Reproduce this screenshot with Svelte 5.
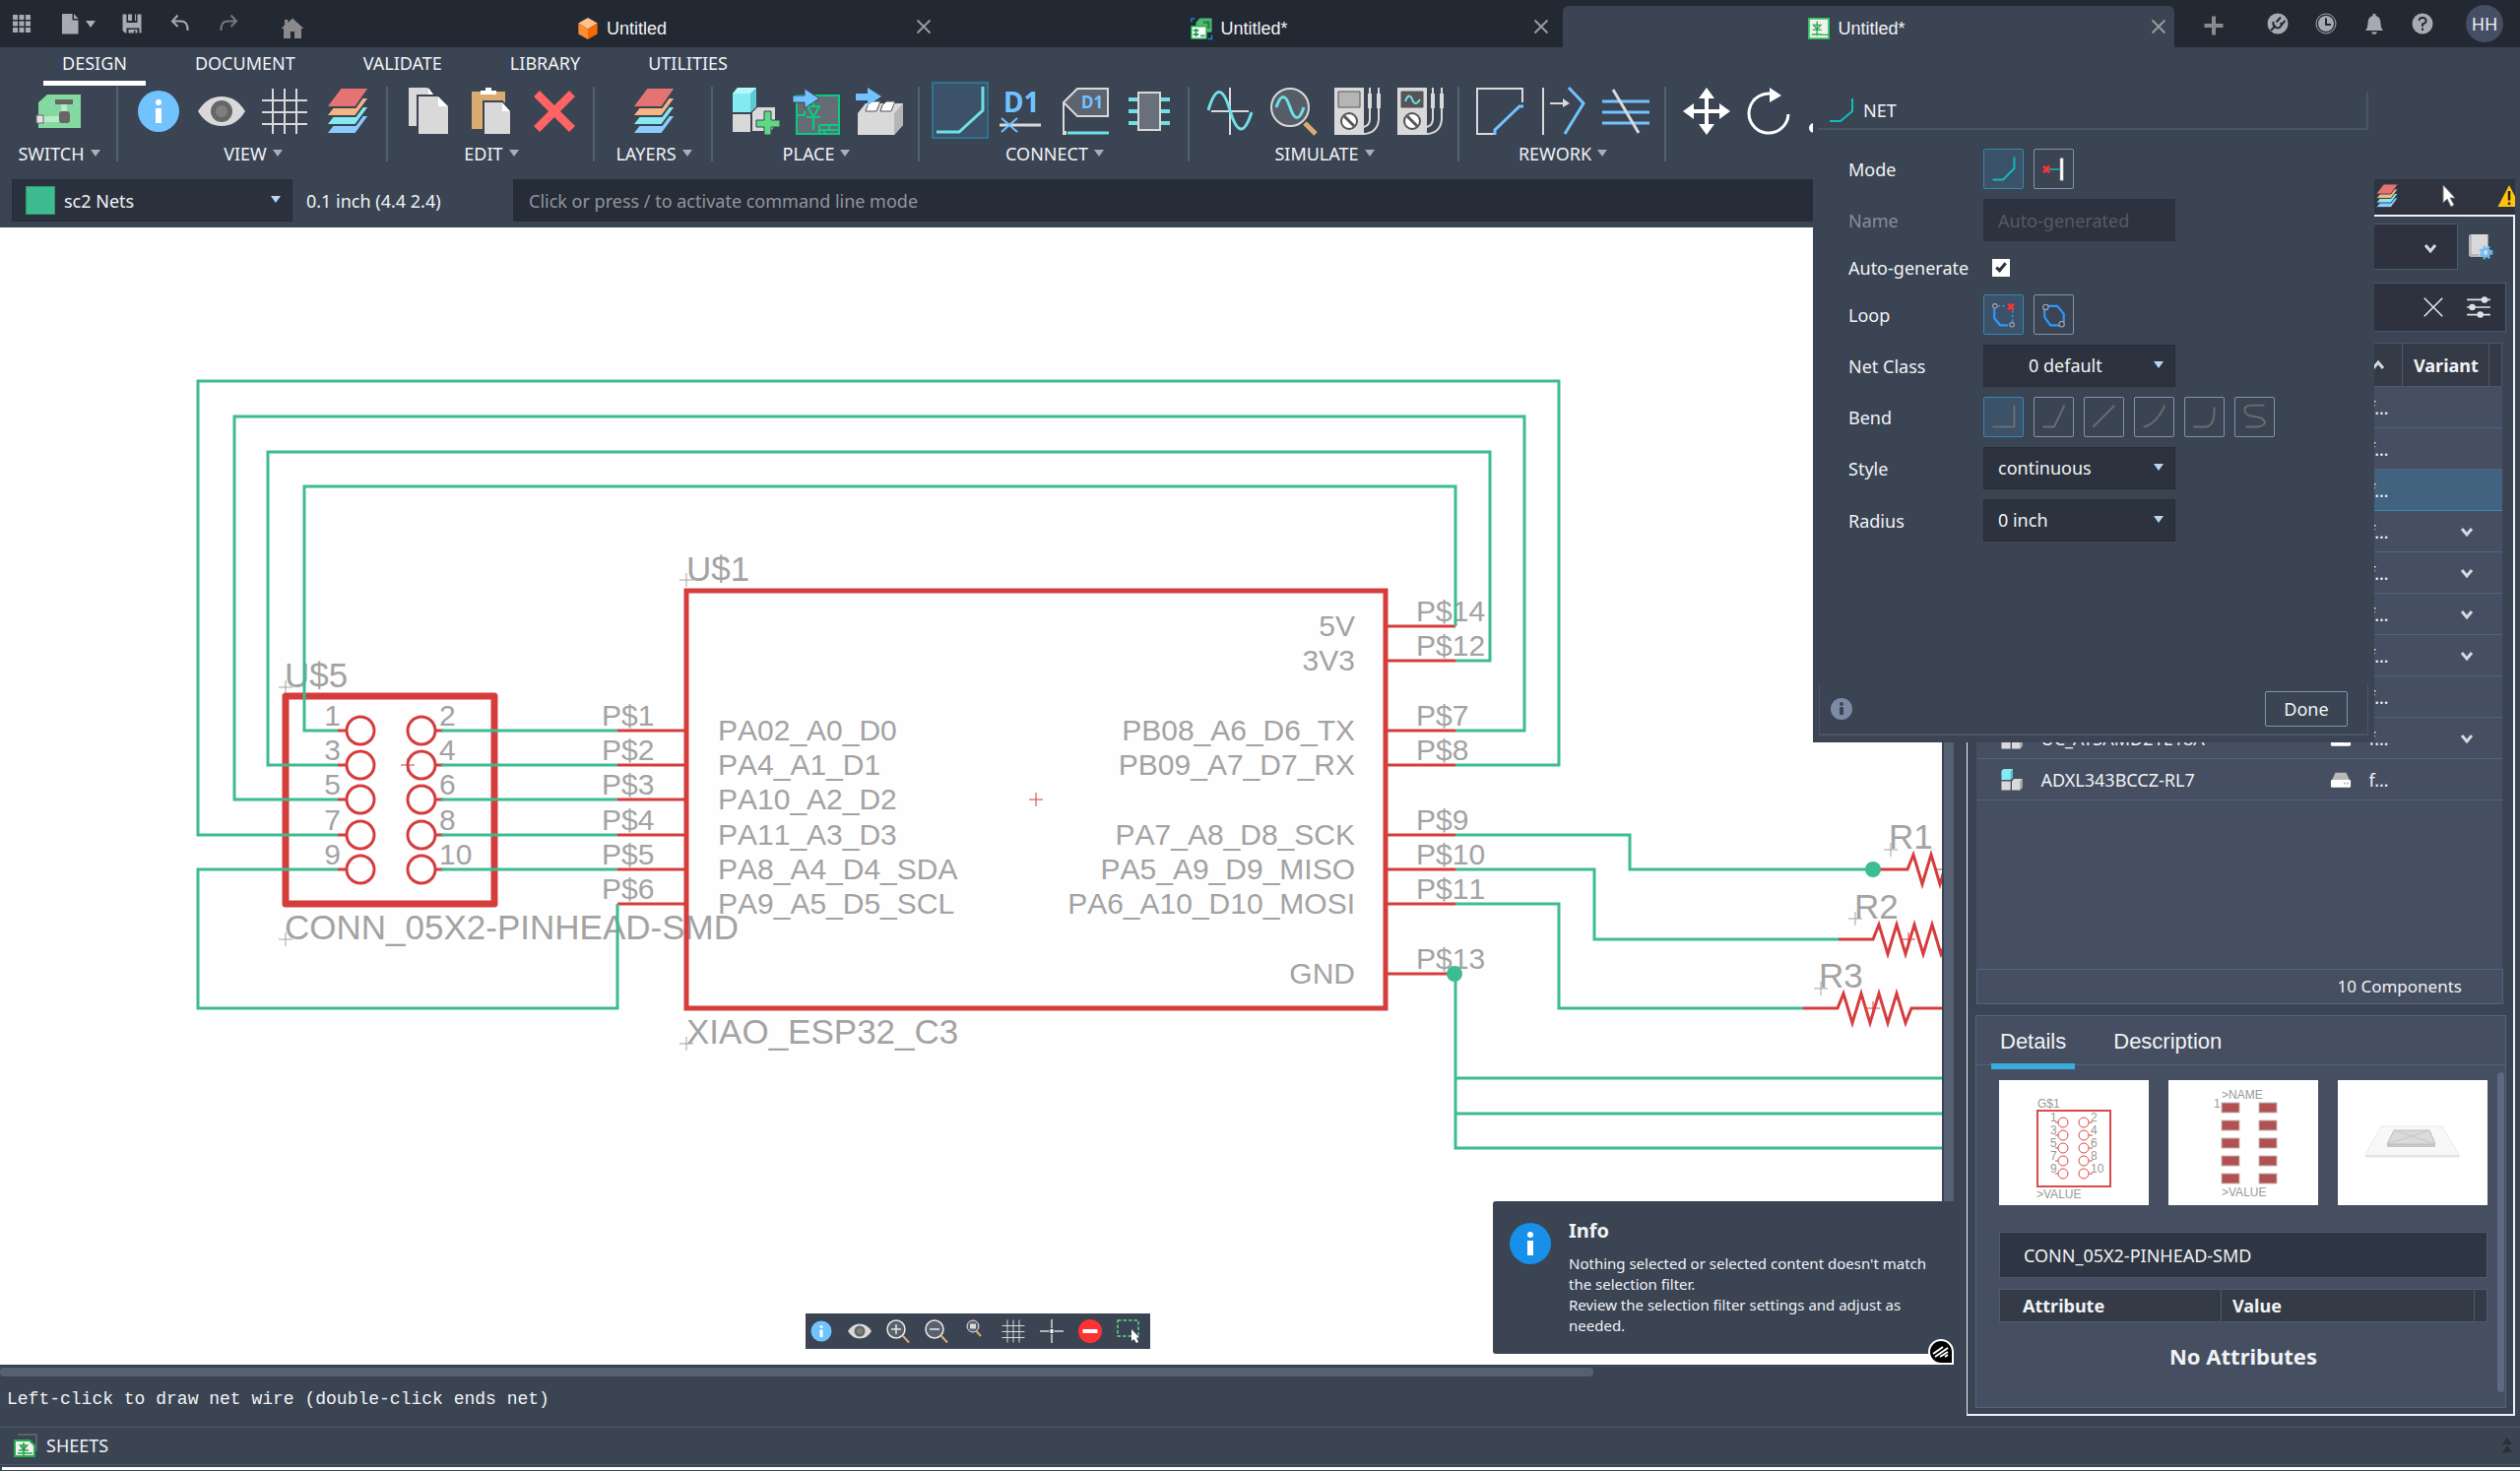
<script>
    let activeMenu = $state('DESIGN');
    let autoGenerate = $state(true);
    let detailTab = $state('Details');

    const menus = ['DESIGN', 'DOCUMENT', 'VALIDATE', 'LIBRARY', 'UTILITIES'];

    const tabs = [
        { title: 'Untitled', icon: 'cube' },
        { title: 'Untitled*', icon: 'project' },
        { title: 'Untitled*', icon: 'sheet', active: true }
    ];

    const groups = [
        { label: 'SWITCH', icons: ['switch'], wide: true },
        { label: 'VIEW', icons: ['info', 'eye', 'grid', 'layers'] },
        { label: 'EDIT', icons: ['copy', 'paste', 'delete'] },
        { label: 'LAYERS', icons: ['layers'], wide: true },
        { label: 'PLACE', icons: ['part', 'module', 'package'] },
        { label: 'CONNECT', icons: ['net', 'name', 'label', 'chip'] },
        { label: 'SIMULATE', icons: ['wave', 'probe', 'meter', 'scope'] },
        { label: 'REWORK', icons: ['miter', 'split', 'slice'] }
    ];

    const viewTools = ['info', 'eye', 'zoomin', 'zoomout', 'zoomfit', 'grid', 'origin', 'stop', 'select'];
    const bends = ['M9 31H32V8', 'M9 31H21L32 8', 'M9 31L32 8', 'M9 31Q22 29 32 8', 'M9 31H21Q32 31 31 10', 'M31 8H16Q9 9 10 14T20 20T31 25T24 31H11'];

    const components = [
        {}, {}, { selected: true },
        { expand: true }, { expand: true }, { expand: true }, { expand: true }, {},
        { name: 'UC_ATSAMD21E18A', expand: true },
        { name: 'ADXL343BCCZ-RL7' }
    ];

    // schematic, in sheet units
    const rowY = [742, 777, 812, 848, 883, 918];
    const leftNames = ['PA02_A0_D0', 'PA4_A1_D1', 'PA10_A2_D2', 'PA11_A3_D3', 'PA8_A4_D4_SDA', 'PA9_A5_D5_SCL'];
    const rightPins = [
        { y: 636, pin: 'P$14', name: '5V' },
        { y: 671, pin: 'P$12', name: '3V3' },
        { y: 742, pin: 'P$7', name: 'PB08_A6_D6_TX' },
        { y: 777, pin: 'P$8', name: 'PB09_A7_D7_RX' },
        { y: 848, pin: 'P$9', name: 'PA7_A8_D8_SCK' },
        { y: 883, pin: 'P$10', name: 'PA5_A9_D9_MISO' },
        { y: 918, pin: 'P$11', name: 'PA6_A10_D10_MOSI' },
        { y: 989, pin: 'P$13', name: 'GND' }
    ];
    const resistors = [
        { name: 'R1', x: 1902, y: 883 },
        { name: 'R2', x: 1867, y: 954 },
        { name: 'R3', x: 1831, y: 1024 }
    ];
    const wires = [
        'M343 742H309V494H1478V636',
        'M343 777H272V459H1513V671H1478',
        'M343 812H238V423H1548V742H1478',
        'M343 848H201V387H1583V777H1478',
        'M343 883H201V1024H627V918',
        'M1478 848H1655V883H1902',
        'M1478 883H1619V954H1867',
        'M1478 918H1583V1024H1831',
        'M1478 989V1166H1990',
        'M1478 1095H1990',
        'M1478 1131H1990'
    ];
    const crosses = [[697, 589], [290, 698], [290, 954], [697, 1060], [1920, 863], [1884, 933], [1849, 1004]];
</script>

{#snippet icon(name)}
    <svg viewBox="0 0 48 48" aria-hidden="true">
        {#if name === 'switch'}
            <path d="M3 15L12 7H46V41H3z" fill="#83d99f" />
            <path d="M8 32H24M29 17V25" stroke="#b5ebc5" stroke-width="6" />
            <path d="M20 12H38V17H20z" fill="#666" />
            <rect x="24" y="24" width="11" height="12" rx="3" fill="#666" />
            <path d="M1 28H8V36H1z" fill="#e3e3e3" stroke="#666" />
        {:else if name === 'info'}
            <circle cx="24" cy="24" r="21" fill="#70c3ff" />
            <circle cx="24" cy="15" r="3" fill="#fff" />
            <path d="M21 21H27V36H21z" fill="#fff" />
        {:else if name === 'eye'}
            <path d="M0 24Q9 9 24 9T48 24Q39 39 24 39T0 24z" fill="#d9d9d9" />
            <circle cx="24" cy="24" r="11" fill="#666" />
            <circle cx="24" cy="24" r="6" fill="#808080" />
        {:else if name === 'grid'}
            <path d="M12 1V47M24 1V47M36 1V47M1 13H47M1 25H47M1 37H47" stroke="#d9d9d9" stroke-width="2" />
        {:else if name === 'layers'}
            <g stroke="#3b4453" stroke-width="2">
                <path d="M17 28H46L32 47H2z" fill="#8ccbff" />
                <path d="M17 19H46L32 38H2z" fill="#85e9f0" />
                <path d="M17 10H46L32 29H2z" fill="#f5b583" />
                <path d="M17 0H46L32 20H2z" fill="#e67373" />
            </g>
        {:else if name === 'copy'}
            <path d="M4 0H23L29 7V39H4z" fill="#d9d9d9" />
            <path d="M13 8H34L45 19V48H13z" fill="#d9d9d9" stroke="#3b4453" stroke-width="2" />
            <path d="M24 0V7H29zM34 9V19H44z" fill="#fff" />
        {:else if name === 'paste'}
            <path d="M4 4H38V42H4z" fill="#dbac71" />
            <path d="M13 3H18V0H24V3H29V7H13z" fill="#fff" />
            <path d="M16 14H35L44 24V48H16z" fill="#d9d9d9" stroke="#3b4453" stroke-width="2" />
            <path d="M35 15V24H43z" fill="#fff" />
        {:else if name === 'delete'}
            <path d="M3 9L9 3L24 18L39 3L45 9L30 24L45 39L39 45L24 30L9 45L3 39L18 24z" fill="#ff6363" />
        {:else if name === 'part'}
            <path d="M3 6L8 0H27V19L21 25H3z" fill="#85ebf2" />
            <path d="M3 6L8 0H27L21 6z" fill="#b5f7fb" />
            <path d="M21 6L27 0V19L21 25z" fill="#5ccbd6" />
            <path d="M3 27H21V45H3zM23 25L28 20H46V38L42 44H23z" fill="#d9d9d9" />
            <path d="M35 24H42V33H51V40H42V48H35V40H27V33H35z" fill="#5fd884" stroke="#3b4453" />
        {:else if name === 'module'}
            <path d="M4 8H47V47H4z" fill="#666c76" stroke="#08cc7f" stroke-width="2" />
            <path d="M15 19H27L21 30zM14 30H28M21 30V43M21 12V19M5 28H12V24M27 38H47M27 43H47M27 38V47M37 38V43M32 43V47" fill="none" stroke="#08cc7f" stroke-width="2" />
            <path d="M0 8H12V1L27 11L12 21V15H0z" fill="#70c3ff" stroke="#3b4453" />
        {:else if name === 'package'}
            <path d="M2 26L10 16H48V38L39 48H2z" fill="#d9d9d9" />
            <path d="M39 26L48 16V38L39 48z" fill="#b5b5b5" />
            <path d="M12 18L16 14H25L21 24H10zM27 18L31 14H40L36 24H25z" fill="#fff" stroke="#555" />
            <path d="M0 6H12V0L26 9L12 18V13H0z" fill="#70c3ff" />
        {:else if name === 'net'}
            <path d="M0 46H23L47 24V0" fill="none" stroke="#6fe0e6" stroke-width="3" />
        {:else if name === 'name'}
            <text x="4" y="25" class="d1 big">D1</text>
            <path d="M0 38H42" stroke="#d9d9d9" stroke-width="3" />
            <path d="M2 31L18 45M18 31L2 45" stroke="#70c3ff" stroke-width="2" />
        {:else if name === 'label'}
            <path d="M1 15L15 1H46V29H15z" fill="#5d6470" stroke="#d9d9d9" stroke-width="2" />
            <path d="M1 15V44" stroke="#d9d9d9" stroke-width="2" />
            <path d="M0 44H4V48H0z" fill="#d9d9d9" />
            <path d="M5 46H47" stroke="#6fe0e6" stroke-width="3" />
            <text x="19" y="21" class="d1">D1</text>
        {:else if name === 'chip'}
            <path d="M3 12H45M3 24H45M3 36H45" stroke="#6fe0e6" stroke-width="4" />
            <path d="M13 5H35V43H13z" fill="#69707c" stroke="#d9d9d9" stroke-width="2" />
        {:else if name === 'wave'}
            <path d="M24 0V48M5 24H43" stroke="#d9d9d9" stroke-width="2" />
            <path d="M2 23Q13 -14 24 23T46 25" fill="none" stroke="#6fe0e6" stroke-width="3" />
        {:else if name === 'probe'}
            <path d="M36 36L47 47" stroke="#dbac71" stroke-width="5" />
            <circle cx="21" cy="20" r="19" fill="#565d69" stroke="#d9d9d9" stroke-width="2" />
            <path d="M7 20Q14 -1 21 20T35 20" fill="none" stroke="#6fe0e6" stroke-width="3" />
        {:else if name === 'meter' || name === 'scope'}
            <path d="M2 0H32V48H2z" fill="#d9d9d9" />
            <path d="M6 4H28V20H6z" fill={name === 'scope' ? '#555' : '#b5b5b5'} stroke="#555" />
            {#if name === 'scope'}
                <path d="M10 14Q14 4 17 12T25 12" fill="none" stroke="#6fe0e6" stroke-width="2" />
            {/if}
            <circle cx="17" cy="34" r="8" fill="#fff" stroke="#555" stroke-width="2" />
            <path d="M12 29L22 39" stroke="#555" stroke-width="3" />
            <path d="M38 0V32Q38 38 32 40M47 0V32Q46 46 32 47" fill="none" stroke="#d9d9d9" stroke-width="2" />
            <path d="M36 6H40V21H36zM45 6H49V21H45z" fill="#d9d9d9" />
        {:else if name === 'miter'}
            <path d="M20 47H1V1H47V15" fill="none" stroke="#d9d9d9" stroke-width="2" />
            <path d="M19 48V43L44 19H48" fill="none" stroke="#70c3ff" stroke-width="3" />
        {:else if name === 'split'}
            <path d="M4 0V48M11 16H26" stroke="#d9d9d9" stroke-width="2" />
            <path d="M24 11L31 16L24 20z" fill="#d9d9d9" />
            <path d="M30 0L45 16L26 47" fill="none" stroke="#70c3ff" stroke-width="3" />
        {:else if name === 'slice'}
            <path d="M0 14H48M0 25H48M0 36H48" stroke="#70c3ff" stroke-width="3" />
            <path d="M11 2L37 46" stroke="#d9d9d9" stroke-width="3" />
        {:else if name === 'move'}
            <path d="M24 0L32 11H26V22H37V16L48 24L37 32V26H26V37H32L24 48L16 37H22V26H11V32L0 24L11 16V22H22V11H16z" fill="#fff" />
        {:else if name === 'rotate'}
            <path d="M29 7A20 20 0 1 0 43 27" fill="none" stroke="#fff" stroke-width="3" />
            <path d="M24 0L36 8L24 15z" fill="#fff" />
        {:else if name === 'mirror'}
            <circle cx="5" cy="41" r="5" fill="#fff" />
        {:else if name === 'zoomin' || name === 'zoomout'}
            <path d="M34 34L46 47" stroke="#dbac71" stroke-width="4" />
            <circle cx="20" cy="20" r="18" fill="#5a616d" stroke="#e8e8e8" stroke-width="3" />
            <path d={name === 'zoomin' ? 'M10 20H30M20 10V30' : 'M10 20H30'} stroke="#e8e8e8" stroke-width="3" />
        {:else if name === 'zoomfit'}
            <path d="M27 24L36 34" stroke="#dbac71" stroke-width="4" />
            <circle cx="20" cy="14" r="12" fill="#5a616d" stroke="#e8e8e8" stroke-width="2" />
            <path d="M14 9H26V19H14z" fill="#d9d9d9" />
        {:else if name === 'origin'}
            <path d="M24 0V48M0 24H48" stroke="#d9d9d9" stroke-width="3" />
            <path d="M20 19H28V29H20z" fill="#fff" stroke="#3b4453" stroke-width="2" />
        {:else if name === 'stop'}
            <circle cx="24" cy="24" r="24" fill="#ff3232" />
            <path d="M9 20H39V28H9z" fill="#fff" />
        {:else if name === 'select'}
            <path d="M2 2H44V34H2z" fill="none" stroke="#5fd884" stroke-width="3" stroke-dasharray="7 4" />
            <path d="M30 20V44L35 40L40 48L44 46L40 37H46z" fill="#fff" />
        {:else if name === 'cube'}
            <path d="M24 0L45 12L24 25L3 12z" fill="#ffc08f" />
            <path d="M3 12L24 25V48L3 36z" fill="#ff8d33" />
            <path d="M45 12L24 25V48L45 36z" fill="#f56a00" />
        {:else if name === 'project'}
            <path d="M2 9V2H10M39 47H47V38" fill="none" stroke="#1a8be0" stroke-width="3" />
            <path d="M12 11L20 1H47V32H12z" fill="#4cbb70" />
            <path d="M28 10H40V24" fill="none" stroke="#2b7a45" stroke-width="5" />
            <path d="M2 19H35V46H2z" fill="#fff" stroke="#1fb455" stroke-width="3" />
            <path d="M12 24V42M6 28H18M6 37H18M22 40H32" stroke="#22a04a" stroke-width="4" />
        {:else if name === 'sheet'}
            <path d="M2 2H46V46H2z" fill="#f1f1f1" stroke="#30c25c" stroke-width="4" />
            <path d="M12 16H28L20 26zM10 27H30M20 8V40M8 37H30M28 38H46" fill="none" stroke="#30a852" stroke-width="3" />
        {:else if name === 'apps'}
            <path d="M6 6H16V16H6zM19 6H29V16H19zM32 6H42V16H32zM6 19H16V29H6zM19 19H29V29H19zM32 19H42V29H32zM6 32H16V42H6zM19 32H29V42H19zM32 32H42V42H32z" fill="#a7aab3" />
        {:else if name === 'file'}
            <path d="M8 4H29V17H41V45H8zM32 4L41 14H32z" fill="#a7aab3" />
        {:else if name === 'save'}
            <path d="M5 5H13V22H35V5H43V43H39V33H13V43H10L5 38zM16 5H24V18H16zM30 5H32V18H30zM17 36H35V43H31V38H28V43H17z" fill="#a7aab3" />
        {:else if name === 'undo'}
            <path d="M19 7L8 19L19 30M8 19H25Q40 19 39 38" fill="none" stroke="#a7aab3" stroke-width="4" />
        {:else if name === 'redo'}
            <path d="M29 7L40 19L29 30M40 19H23Q8 19 9 38" fill="none" stroke="#727780" stroke-width="4" />
        {:else if name === 'home'}
            <path d="M24 5L47 26H42V46H28V32H20V46H6V26H1L8 19V8H15V14z" fill="#8a8a8a" />
        {:else if name === 'plus'}
            <path d="M20 5H28V20H43V28H28V43H20V28H5V20H20z" fill="#8a8a8a" />
        {:else if name === 'close'}
            <path d="M11 11L37 37M37 11L11 37" stroke="#9a9a9a" stroke-width="4" />
        {:else if name === 'extensions'}
            <circle cx="24" cy="24" r="21" fill="#a7aab3" />
            <path d="M10 38L20 28M15 20Q13 31 24 33Q34 31 30 22M21 21L30 11M30 28L39 18" fill="none" stroke="#222933" stroke-width="4" />
        {:else if name === 'clock'}
            <circle cx="24" cy="24" r="20" fill="none" stroke="#a7aab3" stroke-width="2" />
            <circle cx="24" cy="24" r="16" fill="#a7aab3" />
            <path d="M24 13V26H34" fill="none" stroke="#222933" stroke-width="4" />
        {:else if name === 'bell'}
            <path d="M21 4H27V8Q37 10 37 24Q37 33 42 38H6Q11 33 11 24Q11 10 21 8zM18 41H30Q28 46 24 46T18 41z" fill="#a7aab3" />
        {:else if name === 'help'}
            <circle cx="24" cy="24" r="21" fill="#a7aab3" />
            <path d="M17 18Q18 11 25 12T31 19Q31 23 24 25V30M24 33V38" fill="none" stroke="#222933" stroke-width="4" />
        {:else if name === 'parts'}
            <path d="M1 5L5 0H26V19L21 24H1z" fill="#85ebf2" />
            <path d="M21 5L26 0V19L21 24z" fill="#4fc1d0" />
            <path d="M1 27H21V47H1zM24 27L29 22H47V41L42 47H24z" fill="#d9d9d9" />
            <path d="M42 27L47 22V41L42 47z" fill="#a5a5a5" />
        {:else if name === 'drive'}
            <path d="M12 8H36L45 28H3z" fill="#b9b9b9" />
            <path d="M2 26Q2 24 5 24H43Q46 24 46 26V38Q46 41 43 41H5Q2 41 2 38z" fill="#fff" />
            <path d="M31 32H34M38 32H41" stroke="#999" stroke-width="4" />
        {:else if name === 'library'}
            <path d="M7 0H38V42H7Q2 42 2 38V5Q2 0 7 0z" fill="#d9d9d9" />
            <path d="M7 0Q2 0 2 5V38Q2 42 7 42H20V37H7z" fill="#b5b5b5" />
            <circle cx="34" cy="34" r="7" fill="none" stroke="#6cbcf5" stroke-width="5" />
            <circle cx="34" cy="34" r="11" fill="none" stroke="#6cbcf5" stroke-width="4" stroke-dasharray="4 5" />
        {:else if name === 'sliders'}
            <path d="M2 10H46M2 24H46M2 38H46" stroke="#dde1e8" stroke-width="3" />
            <circle cx="35" cy="10" r="6" fill="#dde1e8" />
            <circle cx="12" cy="24" r="6" fill="#dde1e8" />
            <circle cx="27" cy="38" r="6" fill="#dde1e8" />
        {:else if name === 'clear'}
            <path d="M7 7L41 41M41 7L7 41" stroke="#dde1e8" stroke-width="3" />
        {:else if name === 'pointer'}
            <path d="M14 2V38L22 30L30 46L36 42L28 28H38z" fill="#fff" stroke="#777" stroke-width="2" />
        {:else if name === 'warning'}
            <path d="M24 2L47 46H1z" fill="#ffc20e" />
            <path d="M24 14V33M24 37V42" stroke="#222" stroke-width="5" />
        {:else if name === 'sheets'}
            <path d="M8 2H46V36" fill="none" stroke="#666b72" stroke-width="3" />
            <path d="M2 14H32L42 24V46H2z" fill="#f1f1f1" stroke="#22b14c" stroke-width="4" />
            <path d="M13 24H27L20 33zM10 34H30M20 18V44M8 40H38" fill="none" stroke="#22a047" stroke-width="3" />
        {:else if name === 'dismiss'}
            <path d="M4 18L15 30M15 18L4 30" stroke="#ff3232" stroke-width="5" />
            <path d="M15 24H34" stroke="#1eb3b3" stroke-width="3" />
            <path d="M35 3H41V45H35z" fill="#fff" stroke="#888" />
        {:else if name === 'loopoff'}
            <path d="M6 11V30L17 43H32" fill="none" stroke="#2e97ff" stroke-width="4" />
            <path d="M13 7H26M40 16V38" stroke="#2e97ff" stroke-width="3" stroke-dasharray="4 4" />
            <path d="M32 3L42 14M42 3L32 14" stroke="#ff3232" stroke-width="5" />
            <circle cx="7" cy="7" r="4" fill="#3b4453" stroke="#aaa" stroke-width="2" />
            <circle cx="39" cy="42" r="4" fill="#3b4453" stroke="#aaa" stroke-width="2" />
        {:else if name === 'loopon'}
            <path d="M6 9V28L17 43H35L42 36V22L30 7H14z" fill="none" stroke="#2e97ff" stroke-width="4" />
            <circle cx="8" cy="9" r="5" fill="#3b4453" stroke="#aaa" stroke-width="2" />
            <circle cx="38" cy="41" r="5" fill="#3b4453" stroke="#aaa" stroke-width="2" />
        {/if}
    </svg>
{/snippet}

{#snippet chevron(up)}
    <svg class="chevron" viewBox="0 0 14 14" aria-hidden="true">
        <path d={up ? 'M2 10L7 4L12 10' : 'M2 4L7 10L12 4'} fill="none" stroke="#d5d9e0" stroke-width="3" />
    </svg>
{/snippet}

<div class="app">
    <header class="titlebar">
        <div class="quick">
            <button aria-label="Data panel">{@render icon('apps')}</button>
            <button class="file" aria-label="File">{@render icon('file')}<i class="caret"></i></button>
            <button aria-label="Save">{@render icon('save')}</button>
            <button aria-label="Undo">{@render icon('undo')}</button>
            <button aria-label="Redo">{@render icon('redo')}</button>
            <button class="home" aria-label="Home">{@render icon('home')}</button>
        </div>
        <div class="tabs">
            {#each tabs as tab}
                <div class="tab" class:active={tab.active}>
                    <button class="tab-title">{@render icon(tab.icon)}{tab.title}</button>
                    <button class="tab-close" aria-label="Close">{@render icon('close')}</button>
                </div>
            {/each}
        </div>
        <button class="new" aria-label="New">{@render icon('plus')}</button>
        <div class="account">
            {#each ['extensions', 'clock', 'bell', 'help'] as name}
                <button aria-label={name}>{@render icon(name)}</button>
            {/each}
            <button class="avatar">HH</button>
        </div>
    </header>

    <nav class="menus">
        {#each menus as menu}
            <button class:active={activeMenu === menu} onclick={() => (activeMenu = menu)}>{menu}</button>
        {/each}
    </nav>

    <div class="ribbon">
        {#each groups as group}
            <div class="group" class:wide={group.wide}>
                <div class="tools">
                    {#each group.icons as name}
                        <button class="tool" class:on={name === 'net'} aria-label={name}>{@render icon(name)}</button>
                    {/each}
                </div>
                <button class="group-label">{group.label}<i class="caret"></i></button>
            </div>
        {/each}
        <div class="group last">
            <div class="tools">
                <button class="tool" aria-label="move">{@render icon('move')}</button>
                <button class="tool" aria-label="rotate">{@render icon('rotate')}</button>
                <button class="tool" aria-label="mirror">{@render icon('mirror')}</button>
            </div>
        </div>
    </div>

    <main>
        <section class="work">
            <div class="command">
                <div class="layer">
                    <span class="swatch"></span>
                    <select aria-label="Layer"><option>sc2 Nets</option></select>
                    <i class="caret blue"></i>
                </div>
                <span class="coords">0.1 inch (4.4 2.4)</span>
                <input aria-label="Command line" placeholder="Click or press / to activate command line mode" />
            </div>

            <div class="sheet">
                <svg class="drawing" viewBox="0 231 1972 1155" preserveAspectRatio="xMinYMin slice">
                    <g class="names">
                        <text x="697" y="590">U$1</text>
                        <text x="697" y="1060">XIAO_ESP32_C3</text>
                        <text x="289" y="698">U$5</text>
                        <text x="289" y="954">CONN_05X2-PINHEAD-SMD</text>
                        {#each resistors as r}
                            <text x={r.x + 16} y={r.y - 21}>{r.name}</text>
                        {/each}
                    </g>
                    <g class="pins">
                        {#each rowY as y, i}
                            <text x="611" y={y - 5}>P${i + 1}</text>
                            <text x="729" y={y + 10}>{leftNames[i]}</text>
                        {/each}
                        {#each rowY.slice(0, 5) as y, i}
                            <text x="346" y={y - 5} text-anchor="end">{i * 2 + 1}</text>
                            <text x="446" y={y - 5}>{i * 2 + 2}</text>
                        {/each}
                        {#each rightPins as p}
                            <text x="1438" y={p.y - 5}>{p.pin}</text>
                            <text x="1376" y={p.y + 10} text-anchor="end">{p.name}</text>
                        {/each}
                    </g>
                    <path class="cross" d={crosses.map(([x, y]) => `M${x - 7} ${y}h14M${x} ${y - 7}v14`).join('')} />

                    <g class="symbol">
                        <rect x="697" y="600" width="710" height="424" stroke-width="5" />
                        <rect x="290" y="707" width="212" height="211" stroke-width="7" stroke-linejoin="round" />
                        {#each rowY as y}
                            <path d="M627 {y}H697" />
                        {/each}
                        {#each rowY.slice(0, 5) as y}
                            <circle cx="366" cy={y} r="14" />
                            <circle cx="428" cy={y} r="14" />
                            <path d="M343 {y}H352M441 {y}H450" />
                        {/each}
                        {#each rightPins as p}
                            <path d="M1407 {p.y}H1478" />
                        {/each}
                        {#each resistors as r}
                            <path d="M{r.x} {r.y}h35l6 -15l9 30l9 -30l9 30l9 -30l9 30l9 -30l9 30l6 -15h50" />
                            <path class="thin" d="M{r.x + 64} {r.y}h14m-7 -7v14" />
                        {/each}
                        <path class="thin" d="M407 777h14m-7 -7v14M1045 812h14m-7 -7v14" />
                    </g>

                    <g class="wires">
                        {#each wires as d}
                            <path {d} />
                        {/each}
                        {#each rowY.slice(0, 5) as y}
                            <path d="M448 {y}H627" />
                        {/each}
                    </g>
                    <circle class="joint" cx="1477" cy="989" r="8" />
                    <circle class="joint" cx="1902" cy="883" r="8" />
                </svg>
                <div class="vscroll"></div>

                <div class="view-tools">
                    {#each viewTools as name}
                        <button aria-label={name}>{@render icon(name)}</button>
                    {/each}
                </div>

                <div class="toast" role="status">
                    <svg viewBox="0 0 42 42" aria-hidden="true">
                        <circle cx="21" cy="21" r="21" fill="#188fe8" />
                        <circle cx="21" cy="12" r="3" fill="#fff" />
                        <path d="M18 18H24V33H18z" fill="#fff" />
                    </svg>
                    <div>
                        <h2>Info</h2>
                        <p>Nothing selected or selected content doesn't match the selection filter.<br />Review the selection filter settings and adjust as needed.</p>
                    </div>
                </div>

                <svg class="badge" viewBox="0 0 26 26" aria-hidden="true">
                    <path d="M13 1A12 12 0 1 0 13 25H25V13A12 12 0 0 0 13 1z" fill="#000" stroke="#fff" stroke-width="2" />
                    <path d="M5 15L15 8M7 18L20 9M12 18L20 13M17 18L20 16" stroke="#fff" stroke-width="2" />
                </svg>
            </div>
            <div class="hscroll"><div class="thumb"></div></div>
            <div class="status">Left-click to draw net wire (double-click ends net)</div>
        </section>

        <aside>
            <div class="side-tabs">
                <button aria-label="Layers">{@render icon('layers')}</button>
                <button aria-label="Selection filter">{@render icon('pointer')}</button>
                <button aria-label="Errors">{@render icon('warning')}</button>
            </div>
            <div class="panel">
                <div class="library">
                    <div class="pick">
                        <select aria-label="Library"><option></option></select>
                        {@render chevron(false)}
                    </div>
                    <button aria-label="Library manager">{@render icon('library')}</button>
                </div>
                <div class="search">
                    <input aria-label="Search" />
                    <button aria-label="Clear">{@render icon('clear')}</button>
                    <button class="filter" aria-label="Filter">{@render icon('sliders')}</button>
                </div>
                <div class="list">
                    <table>
                        <thead>
                            <tr><th class="c-icon"></th><th></th><th class="c-type"></th><th class="c-lib">{@render chevron(true)}</th><th class="c-variant">Variant</th><th class="c-end"></th></tr>
                        </thead>
                        <tbody>
                            {#each components as part}
                                <tr class:selected={part.selected}>
                                    <td class="c-icon">{@render icon('parts')}</td>
                                    <td>{part.name ?? ''}</td>
                                    <td class="c-type">{@render icon('drive')}</td>
                                    <td>f…</td>
                                    <td class="c-expand" colspan="2">{#if part.expand}{@render chevron(false)}{/if}</td>
                                </tr>
                            {/each}
                        </tbody>
                    </table>
                </div>
                <div class="count">10 Components</div>

                <div class="details">
                    <div class="detail-tabs">
                        {#each ['Details', 'Description'] as name}
                            <button class:active={detailTab === name} onclick={() => (detailTab = name)}>{name}</button>
                        {/each}
                    </div>
                    <div class="detail-body">
                        <div class="previews">
                            <svg viewBox="0 0 152 127">
                                <rect x="39" y="31" width="74" height="77" fill="none" stroke="#d94a4a" stroke-width="2" />
                                <text x="39" y="28">G$1</text>
                                <text x="38" y="120">&gt;VALUE</text>
                                {#each [0, 1, 2, 3, 4] as i}
                                    <circle cx="65" cy={43 + i * 13} r="5" fill="none" stroke="#d94a4a" />
                                    <circle cx="86" cy={43 + i * 13} r="5" fill="none" stroke="#d94a4a" />
                                    <path d="M57 {43 + i * 13}h3M91 {43 + i * 13}h4" stroke="#d94a4a" />
                                    <text x="52" y={42 + i * 13}>{i * 2 + 1}</text>
                                    <text x="93" y={42 + i * 13}>{i * 2 + 2}</text>
                                {/each}
                            </svg>
                            <svg viewBox="0 0 152 127">
                                <text x="54" y="19">&gt;NAME</text>
                                <text x="46" y="28">1</text>
                                <text x="54" y="118">&gt;VALUE</text>
                                {#each [0, 1, 2, 3, 4] as i}
                                    <rect x="54" y={23 + i * 18} width="18" height="10" fill="#b55052" stroke="#bbb" />
                                    <rect x="92" y={23 + i * 18} width="18" height="10" fill="#b55052" stroke="#bbb" />
                                {/each}
                            </svg>
                            <svg viewBox="0 0 152 127">
                                <path d="M44 47H106L123 76V78H28V76z" fill="#f8f8f8" stroke="#e8e8e8" />
                                <path d="M28 76H123V78H28z" fill="#e3e3e3" />
                                <path d="M57 51H93L99 65V68H50V65z" fill="#c6c6c6" />
                                <path d="M57 51H93L99 65H50z" fill="#dadada" stroke="#bcbcbc" />
                                <path d="M57 51L99 65M93 51L50 65" stroke="#c6c6c6" />
                            </svg>
                        </div>
                        <input class="part-name" aria-label="Component" value="CONN_05X2-PINHEAD-SMD" readonly />
                        <table class="attributes">
                            <thead><tr><th class="a-name">Attribute</th><th>Value</th><th class="a-end"></th></tr></thead>
                        </table>
                        <p class="none">No Attributes</p>
                    </div>
                </div>
            </div>
        </aside>
    </main>

    <footer>
        <button class="sheets">{@render icon('sheets')}SHEETS</button>
        <svg class="up" viewBox="0 0 10 16" aria-hidden="true"><path d="M5 0L10 7H0zM5 8L10 15H0z" fill="#2b2f36" /></svg>
    </footer>
    <div class="strip"></div>

    <form class="dialog" onsubmit={(e) => e.preventDefault()}>
        <div class="dialog-head">
            <svg viewBox="0 0 24 24" aria-hidden="true"><path d="M0 23H11L23 13V0" fill="none" stroke="#0fbdbd" stroke-width="2" /></svg>
            NET
        </div>
        <div class="dialog-body">
            <span>Mode</span>
            <div class="set">
                <button class="on" aria-label="Net"><svg viewBox="0 0 41 41"><path d="M9 32H20L32 20V8" fill="none" stroke="#0fbdbd" stroke-width="2" /></svg></button>
                <button aria-label="Remove">{@render icon('dismiss')}</button>
            </div>
            <label class="dim" for="net-name">Name</label>
            <input id="net-name" class="field" placeholder="Auto-generated" disabled />
            <label class="auto" for="auto">Auto-generate</label>
            <input id="auto" type="checkbox" bind:checked={autoGenerate} />
            <span>Loop</span>
            <div class="set">
                <button class="on" aria-label="Remove loops">{@render icon('loopoff')}</button>
                <button aria-label="Keep loops">{@render icon('loopon')}</button>
            </div>
            <label for="net-class">Net Class</label>
            <div class="drop"><select id="net-class" class="inset"><option>0 default</option></select><i class="caret blue"></i></div>
            <span>Bend</span>
            <div class="set">
                {#each bends as d, i}
                    <button class:on={i === 0} aria-label="Bend {i}"><svg viewBox="0 0 41 41"><path {d} fill="none" stroke="#6b6e70" stroke-width="2" /></svg></button>
                {/each}
            </div>
            <label for="style">Style</label>
            <div class="drop"><select id="style"><option>continuous</option></select><i class="caret blue"></i></div>
            <label for="radius">Radius</label>
            <div class="drop"><select id="radius"><option>0 inch</option></select><i class="caret blue"></i></div>
        </div>
        <div class="dialog-foot">
            <svg viewBox="0 0 22 22" aria-hidden="true">
                <circle cx="11" cy="11" r="11" fill="#7c8aa5" />
                <circle cx="11" cy="6" r="2" fill="#3b4453" />
                <path d="M9 9H13V17H9z" fill="#3b4453" />
            </svg>
            <button class="done">Done</button>
        </div>
    </form>
</div>

<style>
    :global(body) {
        margin: 0;
        background: #3b4453;
    }

    .app {
        position: relative;
        display: flex;
        flex-direction: column;
        min-height: 100vh;
        overflow: hidden;
        background: #3b4453;
        color: #f0f2f5;
        font: 18px/24px "Noto Sans", sans-serif;
    }

    .app *, .app *::after {
        box-sizing: border-box;
    }

    button, input, select {
        margin: 0;
        padding: 0;
        border: 0;
        border-radius: 0;
        background: none;
        color: inherit;
        font: inherit;
        appearance: none;
    }

    button {
        cursor: pointer;
    }

    svg {
        display: block;
        overflow: visible;
    }

    .caret {
        display: inline-block;
        border: 5px solid transparent;
        border-top: 7px solid #a9aeb8;
        border-bottom: 0;
    }

    .caret.blue {
        border-top-color: #b9d4f0;
    }

    .chevron {
        display: inline-block;
        width: 14px;
        height: 14px;
    }

    /* title bar */
    .titlebar {
        display: flex;
        height: 48px;
        background: #222933;
    }

    .quick {
        display: flex;
        flex: 0 0 333px;
        align-items: center;
        gap: 25px;
        padding-left: 10px;
    }

    .quick svg, .account svg, .new svg {
        width: 24px;
        height: 24px;
    }

    .file {
        display: flex;
        align-items: center;
        gap: 4px;
    }

    .home {
        margin: 8px 0 0 16px;
    }

    .tabs {
        display: flex;
        flex: 0 1 1875px;
        gap: 6px;
        padding-top: 6px;
        font: 18px/24px "Liberation Sans", sans-serif;
    }

    .tab {
        display: flex;
        flex: 1;
        align-items: center;
        padding-right: 4px;
    }

    .tab.active {
        border-radius: 6px 6px 0 0;
        background: #3b4453;
    }

    .tab-title {
        display: flex;
        flex: 1;
        align-items: center;
        justify-content: center;
        gap: 8px;
        padding: 4px 0 0 4px;
    }

    .tab-title svg {
        width: 22px;
        height: 22px;
    }

    .tab-close svg {
        width: 24px;
        height: 24px;
    }

    .new {
        margin: 4px 0 0 28px;
    }

    .account {
        display: flex;
        align-items: center;
        gap: 25px;
        margin-left: auto;
        padding-right: 17px;
    }

    .avatar {
        width: 38px;
        height: 38px;
        margin-left: 7px;
        border-radius: 50%;
        background: #454f64;
    }

    /* menus and ribbon */
    .menus {
        display: flex;
        gap: 31px;
        height: 40px;
        padding-left: 44px;
    }

    .menus button {
        height: 39px;
        padding: 1px 19px 4px;
        border-bottom: 5px solid transparent;
    }

    .menus .active {
        border-color: #fff;
    }

    .ribbon {
        display: flex;
        height: 94px;
        padding-bottom: 18px;
    }

    .group {
        display: flex;
        flex-direction: column;
        align-items: center;
        padding: 0 7px 0 9px;
        border-right: 2px solid #536072;
    }

    .wide {
        width: 120px;
    }

    .last {
        border: 0;
    }

    .tools {
        display: flex;
    }

    .tool {
        width: 64px;
        height: 50px;
    }

    .tool svg {
        width: 48px;
        height: 48px;
        margin: 0 auto;
    }

    .tool.on {
        width: 58px;
        height: 58px;
        margin: -5px 3px -3px;
        border: 2px solid #2f7391;
        background: #3b5268;
    }

    .group-label {
        margin-top: 6px;
        white-space: nowrap;
    }

    .group-label .caret {
        margin: 0 0 4px 6px;
    }

    .d1 {
        fill: #70c3ff;
        font: bold 17px "Noto Sans", sans-serif;
    }

    .d1.big {
        font-size: 28px;
    }

    /* workspace */
    main {
        display: grid;
        flex: 1;
        grid-template-columns: minmax(0, 1fr) 562px;
    }

    .work {
        display: flex;
        flex-direction: column;
    }

    .command {
        display: flex;
        align-items: center;
        padding: 0 14px 6px 12px;
    }

    .layer {
        position: relative;
        width: 285px;
        margin-right: 14px;
    }

    .layer select {
        width: 100%;
        height: 43px;
        padding-left: 52px;
        border: 1px solid #252c36;
        background: #2b323e;
    }

    .swatch {
        position: absolute;
        top: 7px;
        left: 14px;
        width: 30px;
        height: 29px;
        border: 1px solid #2a9b75;
        background: #3fbb91;
    }

    .layer .caret, .drop .caret {
        position: absolute;
        top: 17px;
        right: 12px;
        pointer-events: none;
    }

    .coords {
        width: 210px;
    }

    .command input {
        flex: 1;
        height: 43px;
        padding-left: 16px;
        background: #272d38;
    }

    .command input::placeholder {
        color: #90959d;
        opacity: 1;
    }

    .sheet {
        position: relative;
        display: flex;
        flex: 1;
        overflow: hidden;
    }

    .drawing {
        flex: 1;
        width: 0;
        overflow: hidden;
        background: #fefefe;
    }

    .vscroll {
        width: 10px;
        margin: 0 13px 0 2px;
        background: #556072;
    }

    .names, .pins {
        fill: #a3a3a3;
        font: 30px "Liberation Sans", sans-serif;
        font-kerning: none;
    }

    .names {
        font-size: 35px;
    }

    .cross {
        stroke: #a3a3a3;
    }

    .symbol {
        fill: none;
        stroke: #d53d3d;
        stroke-width: 3px;
    }

    .symbol .thin {
        stroke-width: 1px;
    }

    .wires {
        fill: none;
        stroke: #3dbb91;
        stroke-width: 3px;
    }

    .joint {
        fill: #3dbb91;
    }

    .view-tools {
        position: absolute;
        bottom: 16px;
        left: 818px;
        display: flex;
        align-items: center;
        gap: 15px;
        height: 36px;
        padding: 0 10px 0 4px;
        background: #3b4453;
    }

    .view-tools svg {
        width: 24px;
        height: 24px;
    }

    .toast {
        position: absolute;
        right: 0;
        bottom: 11px;
        display: flex;
        gap: 18px;
        width: 481px;
        height: 155px;
        padding: 22px 24px 0 17px;
        border-radius: 3px 0 0 3px;
        background: #3b4453;
    }

    .toast > svg {
        flex: 0 0 42px;
        height: 42px;
    }

    .toast h2 {
        margin: -4px 0 11px;
        font: bold 20px/24px "Noto Sans", sans-serif;
    }

    .toast p {
        margin: 0;
        font: 15px/21px "Noto Sans", sans-serif;
    }

    .badge {
        position: absolute;
        right: 13px;
        bottom: 0;
        width: 26px;
        height: 26px;
    }

    .hscroll {
        height: 14px;
        padding-top: 3px;
    }

    .thumb {
        width: 81%;
        height: 9px;
        border-radius: 4px;
        background: #556072;
    }

    .status {
        height: 49px;
        padding-left: 7px;
        font: 18px/43px "Liberation Mono", monospace;
    }

    /* side panel */
    aside {
        display: flex;
        flex-direction: column;
        padding: 0 5px 11px 0;
    }

    .side-tabs {
        display: flex;
        justify-content: flex-end;
        align-items: center;
        gap: 38px;
        height: 36px;
        padding-bottom: 3px;
        overflow: hidden;
        background: #2e333f;
    }

    .side-tabs button:last-child {
        margin-right: -6px;
    }

    .side-tabs svg {
        width: 24px;
        height: 24px;
    }

    .panel {
        display: flex;
        flex: 1;
        flex-direction: column;
        padding: 7px 7px 6px 8px;
        border: 2px solid #eef0f3;
        border-left-width: 1px;
    }

    .library {
        display: flex;
        align-items: center;
        gap: 10px;
    }

    .library .pick {
        position: relative;
        flex: 1;
        height: 47px;
        border: 1px solid #4c5a6f;
        background: #2d323e;
    }

    .pick select {
        width: 100%;
        height: 100%;
    }

    .pick .chevron {
        position: absolute;
        top: 17px;
        right: 20px;
    }

    .library button {
        margin-right: 13px;
    }

    .library button svg, .search svg {
        width: 26px;
        height: 26px;
    }

    .search {
        display: flex;
        align-items: center;
        gap: 20px;
        height: 50px;
        margin: 13px 0 11px;
        padding-right: 14px;
        border: 1px solid #4c5a6f;
        background: #2d323e;
    }

    .search input {
        flex: 1;
        height: 100%;
    }

    .list {
        flex: 1;
        margin: 0 4px 0 1px;
        background: #464f61;
    }

    table {
        width: 100%;
        border-collapse: collapse;
        table-layout: fixed;
    }

    .list th {
        height: 44px;
        border: 1px solid #4b586b;
        background: #343b47;
        text-align: left;
    }

    .list td {
        height: 42px;
        padding: 0;
        border-top: 1px solid #53657a;
        border-bottom: 1px solid #53657a;
    }

    .list .selected td {
        border-color: #3a8bb4;
        background: #42637f;
    }

    .list .c-icon {
        width: 65px;
        padding-left: 24px;
    }

    .c-icon svg, .c-type svg {
        width: 22px;
        height: 22px;
    }

    .list .c-type {
        width: 40px;
    }

    .list .c-lib {
        width: 34px;
        padding: 0 0 0 2px;
    }

    .list .c-variant {
        width: 88px;
        padding: 0 11px;
    }

    .c-end {
        width: 13px;
    }

    .list .c-expand {
        padding-left: 58px;
    }

    .count {
        height: 36px;
        margin: 0 3px 11px 1px;
        padding-right: 41px;
        border: 1px solid #53657a;
        background: #464f61;
        font-size: 17px;
        line-height: 34px;
        text-align: right;
    }

    .details {
        position: relative;
        height: 399px;
        border: 1px solid #53657a;
        background: #464f61;
    }

    .details::after {
        content: '';
        position: absolute;
        top: 57px;
        right: 1px;
        bottom: 15px;
        width: 7px;
        border-radius: 4px;
        background: #5c6a83;
    }

    .detail-tabs {
        display: flex;
        gap: 30px;
        height: 50px;
        padding-left: 15px;
        border-bottom: 1px solid #53617a;
        font: 22px/24px "Liberation Sans", sans-serif;
    }

    .detail-tabs button {
        height: 54px;
        padding: 3px 9px 0;
        border-bottom: 6px solid transparent;
    }

    .detail-tabs .active {
        border-color: #38abdf;
    }

    .detail-body {
        padding: 15px 18px 0 23px;
    }

    .previews {
        display: flex;
        justify-content: space-between;
    }

    .previews svg {
        width: 152px;
        height: 127px;
        background: #fff;
        fill: #999;
        font: 12px "Liberation Sans", sans-serif;
    }

    .part-name {
        width: 100%;
        height: 47px;
        margin: 27px 0 11px;
        padding-left: 24px;
        border: 1px solid #4c5a6f;
        background: #2f3643;
    }

    .attributes th {
        height: 33px;
        padding: 0 0 0 11px;
        border: 1px solid #4b5c72;
        background: #343b47;
        text-align: left;
    }

    .attributes .a-name {
        width: 225px;
        padding-left: 23px;
    }

    .attributes .a-end {
        width: 13px;
        padding: 0;
    }

    .none {
        margin: 18px 0 0;
        font: bold 22px/32px "Noto Sans", sans-serif;
        text-align: center;
    }

    /* footer */
    footer {
        display: flex;
        align-items: center;
        justify-content: space-between;
        height: 39px;
        padding: 0 8px 1px 14px;
        border: 1px solid #4b5868;
        border-width: 1px 0;
    }

    .sheets {
        display: flex;
        align-items: center;
        gap: 9px;
    }

    .sheets svg {
        width: 24px;
        height: 24px;
    }

    .up {
        width: 10px;
        height: 16px;
    }

    .strip {
        height: 3px;
        margin: 2px 0 1px 2px;
        background: #fff;
    }

    /* net inspector */
    .dialog {
        position: absolute;
        top: 90px;
        right: 148px;
        display: flex;
        flex-direction: column;
        width: 570px;
        height: 664px;
        padding: 4px 6px 7px 5px;
        background: #3b4453;
    }

    .dialog-head {
        display: flex;
        align-items: center;
        gap: 10px;
        height: 38px;
        padding-left: 12px;
        border: 2px solid #4a5565;
        border-width: 0 2px 2px 0;
    }

    .dialog-head svg {
        width: 24px;
        height: 24px;
    }

    .dialog-body {
        display: grid;
        grid-template-columns: 137px 1fr;
        align-items: center;
        gap: 10px 0;
        padding: 19px 0 0 31px;
    }

    .dim {
        color: #878d97;
    }

    .auto {
        line-height: 34px;
    }

    .set {
        display: flex;
        gap: 10px;
    }

    .set button {
        width: 41px;
        height: 41px;
        border: 1px solid #8492ad;
        border-radius: 2px;
    }

    .set .on {
        border-color: #3388b0;
        background: #3b5268;
    }

    .set button svg {
        width: 26px;
        height: 26px;
        margin: auto;
    }

    .set button svg[viewBox="0 0 41 41"] {
        width: 39px;
        height: 39px;
    }

    .field, .drop {
        position: relative;
        width: 195px;
        height: 43px;
        background: #2c323e;
    }

    .field {
        padding-left: 15px;
    }

    .field::placeholder {
        color: #545b66;
        opacity: 1;
    }

    .drop select {
        width: 100%;
        height: 100%;
        padding: 0 0 2px 14px;
        border: 1px solid #262d37;
    }

    .drop .inset {
        padding-left: 45px;
    }

    input[type="checkbox"] {
        position: relative;
        width: 18px;
        height: 18px;
        margin-left: 9px;
        background: #fff;
    }

    input[type="checkbox"]:checked::after {
        content: '';
        position: absolute;
        top: 2px;
        left: 6px;
        width: 6px;
        height: 11px;
        border: solid #2b323e;
        border-width: 0 3px 3px 0;
        transform: rotate(40deg);
    }

    .dialog-foot {
        display: flex;
        align-items: center;
        justify-content: space-between;
        height: 53px;
        margin: auto 0 0 1px;
        padding: 0 20px 0 11px;
        border: 1px solid #4a5565;
        border-width: 0 1px 2px 1px;
    }

    .dialog-foot svg {
        width: 22px;
        height: 22px;
    }

    .done {
        width: 84px;
        height: 36px;
        border: 1px solid #8492ad;
        border-radius: 2px;
    }
</style>
